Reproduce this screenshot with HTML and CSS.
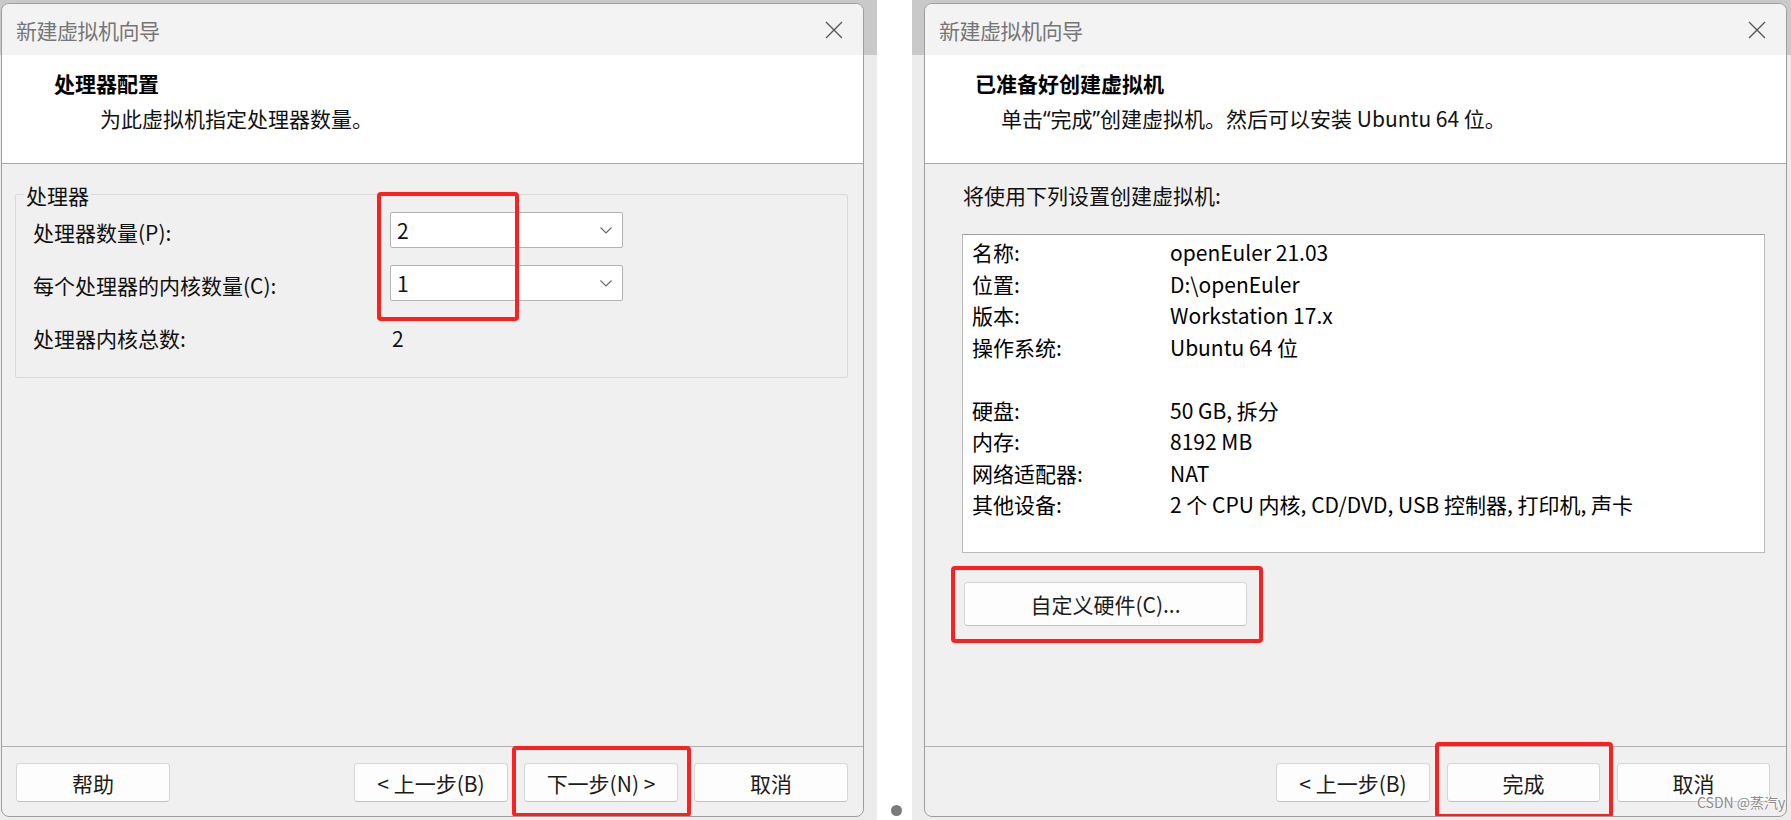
FILE: index.html
```html
<!DOCTYPE html>
<html lang="zh-CN">
<head>
<meta charset="utf-8">
<title>新建虚拟机向导</title>
<link rel="stylesheet" href="styles.css">
</head>
<body>
<div class="stage">
  <div class="panel panel-left">
    <section class="dialog">
      <header class="titlebar">
        <span class="title">新建虚拟机向导</span>
        <svg class="close" viewBox="0 0 18 18" width="18" height="18"><path d="M1 1 L17 17 M17 1 L1 17" stroke="#555" stroke-width="1.3" fill="none"/></svg>
      </header>
      <div class="banner">
        <div class="banner-title">处理器配置</div>
        <div class="banner-sub sub-cpu">为此虚拟机指定处理器数量。</div>
      </div>
      <div class="body body-cpu">
        <div class="group">
          <div class="group-label">处理器</div>
          <div class="group-grid">
            <div class="field-label">处理器数量(P):</div>
            <div class="combo"><span>2</span><svg viewBox="0 0 12 7" width="12" height="7"><path d="M0.5 0.5 L6 6 L11.5 0.5" stroke="#666" stroke-width="1.1" fill="none"/></svg></div>
            <div class="field-label">每个处理器的内核数量(C):</div>
            <div class="combo"><span>1</span><svg viewBox="0 0 12 7" width="12" height="7"><path d="M0.5 0.5 L6 6 L11.5 0.5" stroke="#666" stroke-width="1.1" fill="none"/></svg></div>
            <div class="field-label">处理器内核总数:</div>
            <div class="field-value">2</div>
          </div>
        </div>
      </div>
      <footer class="footer">
        <button class="btn">帮助</button>
        <span class="spacer"></span>
        <button class="btn">&lt; 上一步(B)</button>
        <button class="btn">下一步(N) &gt;</button>
        <button class="btn">取消</button>
      </footer>
      <div class="mark mark-cpu"></div>
      <div class="mark mark-next"></div>
    </section>
  </div>

  <div class="gutter"><span class="dot"></span></div>

  <div class="panel panel-right">
    <section class="dialog">
      <header class="titlebar">
        <span class="title">新建虚拟机向导</span>
        <svg class="close" viewBox="0 0 18 18" width="18" height="18"><path d="M1 1 L17 17 M17 1 L1 17" stroke="#555" stroke-width="1.3" fill="none"/></svg>
      </header>
      <div class="banner banner-ready">
        <div class="banner-title">已准备好创建虚拟机</div>
        <div class="banner-sub sub-ready">单击<span class="q">“</span>完成<span class="q">”</span>创建虚拟机。然后可以安装 Ubuntu 64 位。</div>
      </div>
      <div class="body body-ready">
        <div class="intro">将使用下列设置创建虚拟机:</div>
        <div class="summary">
          <div>名称:</div><div>openEuler 21.03</div>
          <div>位置:</div><div>D:\openEuler</div>
          <div>版本:</div><div>Workstation 17.x</div>
          <div>操作系统:</div><div>Ubuntu 64 位</div>
          <div class="blank"></div><div class="blank"></div>
          <div>硬盘:</div><div>50 GB, 拆分</div>
          <div>内存:</div><div>8192 MB</div>
          <div>网络适配器:</div><div>NAT</div>
          <div>其他设备:</div><div>2 个 CPU 内核, CD/DVD, USB 控制器, 打印机, 声卡</div>
        </div>
        <button class="btn btn-custom">自定义硬件(C)...</button>
      </div>
      <footer class="footer footer-ready">
        <span class="spacer"></span>
        <button class="btn">&lt; 上一步(B)</button>
        <button class="btn">完成</button>
        <button class="btn">取消</button>
      </footer>
      <div class="mark mark-custom"></div>
      <div class="mark mark-finish"></div>
    </section>
  </div>

  <div class="watermark">CSDN @蒸汽y</div>
</div>
</body>
</html>
```

FILE: styles.css
```css
* { box-sizing: border-box; }

html, body {
  margin: 0;
  padding: 0;
  background: #ffffff;
}

body {
  font-family: "Noto Sans CJK SC", "Noto Sans", sans-serif;
  font-size: 21px;
  color: #111;
}

.stage {
  position: relative;
  display: flex;
  width: 1791px;
  height: 820px;
  overflow: hidden;
}

.panel {
  height: 820px;
  background: linear-gradient(to bottom, #c9c9c9 0, #c9c9c9 55px, #ececec 55px, #ececec 100%);
}

.panel-left {
  width: 877px;
  padding: 3px 13px 0 1px;
}

.panel-right {
  width: 879px;
  padding: 3px 4px 0 12px;
}

.gutter {
  width: 35px;
  height: 820px;
  background: #ffffff;
  display: flex;
  align-items: flex-end;
  padding: 0 0 4px 14px;
}

.dot {
  width: 11px;
  height: 11px;
  border-radius: 50%;
  background: #7a7a7a;
}

.dialog {
  position: relative;
  width: 863px;
  height: 814px;
  border: 1px solid #9e9e9e;
  border-radius: 8px;
  overflow: hidden;
  background: #f0f0f0;
  display: flex;
  flex-direction: column;
}

.titlebar {
  height: 51px;
  flex: none;
  background: #f3f3f3;
  display: flex;
  align-items: center;
  justify-content: space-between;
  padding: 0 20px 0 14px;
}

.title {
  color: #767676;
  font-size: 21px;
  line-height: 28px;
  letter-spacing: -0.5px;
}

.close {
  display: block;
  margin-top: 1px;
}

.banner {
  height: 109px;
  flex: none;
  background: #ffffff;
  border-bottom: 1px solid #a9a9a9;
  padding: 14px 0 0 52px;
}

.banner-ready {
  padding-left: 50px;
}

.banner-title {
  font-weight: 700;
  line-height: 28px;
  color: #000;
}

.banner-sub {
  line-height: 28px;
  margin-top: 7px;
  color: #111;
}

.q {
  font-family: "Noto Sans", "DejaVu Sans", sans-serif;
}

.sub-cpu { margin-left: 46px; }
.sub-ready { margin-left: 26px; }

.body {
  flex: 1;
}

.body-cpu {
  padding: 30px 15px 0 13px;
}

.group {
  border: 1px solid #d9d9d9;
  border-radius: 2px;
  height: 184px;
}

.group-label {
  width: fit-content;
  margin: -12px 0 0 8px;
  padding: 0 2px;
  line-height: 24px;
  background: #f0f0f0;
}

.group-grid {
  display: grid;
  grid-template-columns: 357px 233px;
  grid-auto-rows: 36px;
  row-gap: 17px;
  align-items: center;
  padding: 5px 0 0 17px;
}

.field-label {
  line-height: 36px;
  padding-top: 3px;
}

.field-value {
  padding-left: 2px;
  padding-top: 3px;
}

.combo {
  height: 36px;
  border: 1px solid #b3b3b3;
  border-radius: 2px;
  background: #ffffff;
  display: flex;
  align-items: center;
  justify-content: space-between;
  padding: 0 10px 0 6px;
  line-height: 34px;
}

.combo svg { display: block; }

.footer {
  height: 70px;
  flex: none;
  border-top: 1px solid #b0b0b0;
  display: flex;
  gap: 16px;
  padding: 16px 15px 0 14px;
}

.footer-ready {
  gap: 17px;
  padding-right: 16px;
}

.spacer { flex: 1; }

.btn {
  width: 154px;
  height: 39px;
  font-family: inherit;
  font-size: 21px;
  line-height: 26px;
  color: #1b1b1b;
  background: #fdfdfd;
  border: 1px solid #d6d6d6;
  border-bottom-color: #c2c2c2;
  border-radius: 4px;
  padding: 0;
}

.footer-ready .btn { width: 153px; }
.footer-ready .btn:first-of-type { width: 154px; }

.body-ready {
  padding: 17px 21px 0 37px;
}

.intro {
  line-height: 28px;
  padding-left: 1px;
}

.summary {
  margin-top: 25px;
  height: 319px;
  background: #ffffff;
  border: 1px solid #b9b9b9;
  border-top-color: #9d9d9d;
  display: grid;
  grid-template-columns: 198px 1fr;
  grid-auto-rows: 31.5px;
  line-height: 31.5px;
  padding: 2px 0 0 9px;
  color: #000;
}

.btn-custom {
  display: block;
  width: 283px;
  height: 44px;
  margin: 29px 0 0 2px;
}

.mark {
  position: absolute;
  border: 4px solid #ff1f1f;
  border-radius: 4px;
}

.mark-cpu { left: 375px; top: 188px; width: 142px; height: 129px; }
.mark-next { left: 510px; top: 742px; width: 179px; height: 71px; }
.mark-custom { left: 26px; top: 562px; width: 312px; height: 77px; }
.mark-finish { left: 510px; top: 738px; width: 178px; height: 76px; }

.watermark {
  position: absolute;
  left: 1697px;
  top: 792px;
  font-size: 14px;
  line-height: 20px;
  color: #8c8c8c;
  text-shadow: 0 0 2px #fff, 0 0 2px #fff;
}
```
